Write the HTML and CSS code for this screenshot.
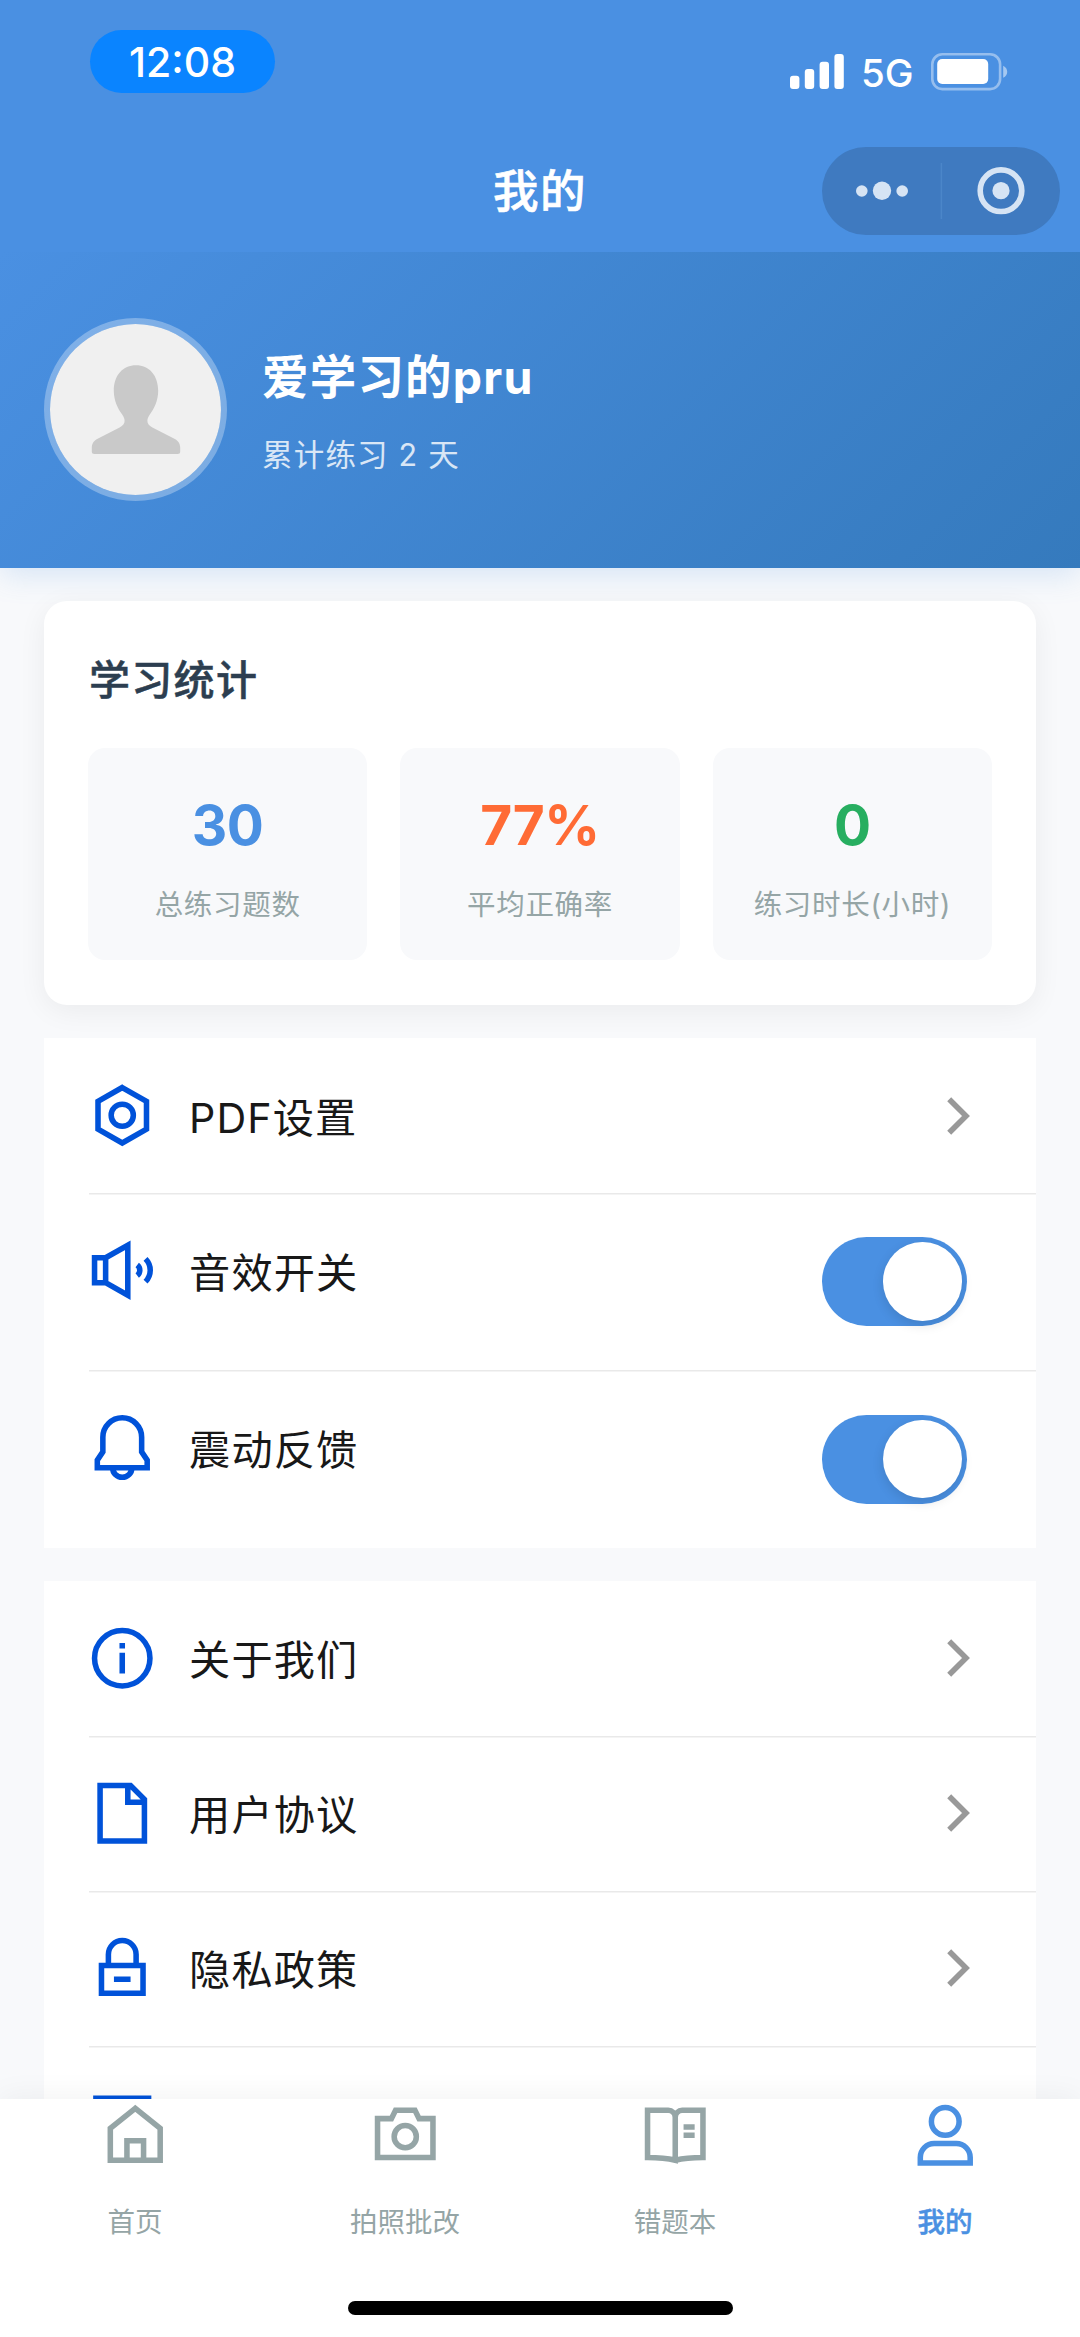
FILE: index.html
```html
<!DOCTYPE html>
<html lang="zh-CN">
<head>
<meta charset="utf-8">
<title>我的</title>
<link rel="stylesheet" href="styles.css">
</head>
<body>
<div class="app">
  <header class="top">
    <div class="status">
      <div class="clock"><span class="clock-text">12:08</span></div>
      <div class="signals">
        <svg class="bars" width="54" height="35" viewBox="0 0 54 35" fill="#fff">
          <rect x="0" y="21.7" width="9.4" height="13.3" rx="3"/>
          <rect x="14.8" y="15" width="9.4" height="20" rx="3"/>
          <rect x="29.6" y="7.7" width="9.4" height="27.3" rx="3"/>
          <rect x="44.4" y="0" width="9.4" height="35" rx="3"/>
        </svg>
        <span class="network">5G</span>
        <svg class="battery" width="77" height="38" viewBox="0 0 77 38">
          <rect x="1.3" y="1.3" width="67.8" height="34.8" rx="10" fill="none" stroke="#fff" stroke-opacity=".42" stroke-width="2.6"/>
          <rect x="6.2" y="6" width="51" height="25" rx="5" fill="#fff"/>
          <path d="M72.2 12.7q4 2 4 6t-4 6z" fill="#fff" fill-opacity=".5"/>
        </svg>
      </div>
    </div>
    <div class="navbar">
      <h1 class="nav-title">我的</h1>
      <div class="capsule">
        <svg width="238" height="88" viewBox="0 0 238 88" fill="#d6e4f4">
          <circle cx="39.8" cy="44" r="5.8"/>
          <circle cx="60" cy="43.7" r="9.2"/>
          <circle cx="80.2" cy="44" r="5.8"/>
          <path d="M119.4 16v56" stroke="#4b86c9" stroke-width="1.5"/>
          <circle cx="179" cy="43.7" r="20.8" fill="none" stroke="#d6e4f4" stroke-width="5.6"/>
          <circle cx="179" cy="43.7" r="8.6"/>
        </svg>
      </div>
    </div>
  </header>

  <main class="content">
    <section class="profile">
      <div class="avatar">
        <svg width="172" height="172" viewBox="0 0 172 172" fill="#c9c9c9">
          <path d="M86 41.3c13 0 22.2 10 22.2 25.5 0 10-4.200 18-8.200 23.500-2 3-2.600 5-2.600 6.500 0 3 1.500 4.700 5 6.700l22 11.200c4 2.200 5.800 4.800 5.800 9V127.500q0 2.500-2.500 2.500H44.300q-2.500 0-2.500-2.500V123.700c0-4.200 1.800-6.800 5.800-9l22-11.200c3.500-2 5-3.700 5-6.700 0-1.500-.6-3.500-2.600-6.500-4-5.500-8.200-13.500-8.200-23.500C63.800 51.300 73 41.300 86 41.300z"/>
        </svg>
      </div>
      <div class="who">
        <div class="name">爱学习的pru</div>
        <div class="days">累计练习 2 天</div>
      </div>
    </section>

    <section class="stats">
      <h2 class="stats-title">学习统计</h2>
      <div class="tiles">
        <div class="tile"><div class="num blue">30</div><div class="label">总练习题数</div></div>
        <div class="tile"><div class="num orange">77%</div><div class="label">平均正确率</div></div>
        <div class="tile"><div class="num green">0</div><div class="label">练习时长(小时)</div></div>
      </div>
    </section>

    <section class="group">
      <div class="row">
        <svg class="icon" viewBox="0 0 24 24"><path d="M12 2l8.750 5v10L12 22l-8.750-5V7z"/><circle cx="12" cy="12" r="4"/></svg>
        <div class="cell"><span class="text">PDF设置</span><svg class="chevron" viewBox="0 0 24 38"><path d="M2.200 2.200L19 19 2.200 35.800"/></svg></div>
      </div>
      <div class="row">
        <svg class="icon" viewBox="0 0 24 24"><path d="M2 7.500h4v9H2zM6 7.500L14 3v18l-8-4.500z"/><path d="M17.400 10.100a2.400 2.400 0 0 1 0 3.800M20.400 7.900a5.800 5.800 0 0 1 0 8.200"/></svg>
        <div class="cell"><span class="text">音效开关</span><span class="switch"><i class="knob"></i></span></div>
      </div>
      <div class="row">
        <svg class="icon" viewBox="0 0 24 24"><path d="M5 8a7 7 0 0 1 14 0v5.300l2 3V19H3v-2.700l2-3zM8.500 19a3.500 3.500 0 0 0 7 0"/></svg>
        <div class="cell"><span class="text">震动反馈</span><span class="switch"><i class="knob"></i></span></div>
      </div>
    </section>

    <section class="group">
      <div class="row">
        <svg class="icon" viewBox="0 0 24 24"><circle cx="12" cy="12" r="10"/><path d="M12 6.500v2M12 10v7.500"/></svg>
        <div class="cell"><span class="text">关于我们</span><svg class="chevron" viewBox="0 0 24 38"><path d="M2.200 2.200L19 19 2.200 35.800"/></svg></div>
      </div>
      <div class="row">
        <svg class="icon" viewBox="0 0 24 24"><path d="M4 2h11l5 5v15H4zM14 2v6h6"/></svg>
        <div class="cell"><span class="text">用户协议</span><svg class="chevron" viewBox="0 0 24 38"><path d="M2.200 2.200L19 19 2.200 35.800"/></svg></div>
      </div>
      <div class="row">
        <svg class="icon" viewBox="0 0 24 24"><path d="M4.500 11h15v10h-15zM7 11V7a5 5 0 0 1 10 0v4M9 16h6"/></svg>
        <div class="cell"><span class="text">隐私政策</span><svg class="chevron" viewBox="0 0 24 38"><path d="M2.200 2.200L19 19 2.200 35.800"/></svg></div>
      </div>
      <div class="row">
        <svg class="icon" viewBox="0 0 24 24"><path d="M2.500 3h19v18h-19z"/></svg>
        <div class="cell"></div>
      </div>
    </section>
  </main>

  <nav class="tabbar">
    <div class="tabs">
      <div class="tab">
        <svg class="tab-icon" viewBox="0 0 24 24"><path d="M12 2.300L3 9.500V21h18V9.500zM9 21v-7h6v7"/></svg>
        <span>首页</span>
      </div>
      <div class="tab">
        <svg class="tab-icon" viewBox="0 0 24 24"><path d="M2 6h5l1.500-3h7L17 6h5v14H2z"/><circle cx="12" cy="12.500" r="4"/></svg>
        <span>拍照批改</span>
      </div>
      <div class="tab">
        <svg class="tab-icon" viewBox="0 0 24 24"><path d="M12 21Q8 20 2 20V3h7.500A2.500 2.500 0 0 1 12 5.500zM12 21q4-1 10-1V3h-7.500A2.500 2.500 0 0 0 12 5.500M15 9h4M15 12h4"/></svg>
        <span>错题本</span>
      </div>
      <div class="tab active">
        <svg class="tab-icon" viewBox="0 0 24 24"><circle cx="12" cy="7" r="5"/><path d="M3 22v-2a5 5 0 0 1 5-5h8a5 5 0 0 1 5 5v2z"/></svg>
        <span>我的</span>
      </div>
    </div>
    <div class="home-indicator"></div>
  </nav>
</div>
</body>
</html>
```
FILE: styles.css
```css
* { box-sizing: border-box; margin: 0; padding: 0; }

body {
  width: 1080px;
  font-family: Inter, "Noto Sans CJK SC", sans-serif;
  background: #f8f9fb;
}

svg { display: block; flex: none; }

.app {
  display: flex;
  flex-direction: column;
  height: 2337px;
  overflow: hidden;
}

/* status bar and navigation */
.top { flex: none; height: 252px; background: #4a90e2; color: #fff; }

.status {
  display: flex;
  justify-content: space-between;
  align-items: flex-start;
  height: 147px;
  padding: 30px 72px 0 90px;
}

.clock {
  display: flex;
  align-items: center;
  justify-content: center;
  width: 185px;
  height: 63px;
  border-radius: 32px;
  background: #0a84ff;
  font-size: 41px;
  font-weight: 500;
}

.signals { display: flex; align-items: flex-start; padding-top: 23px; }
.bars { margin-top: 1px; }
.network { width: 87px; padding-left: 17px; font-size: 38.500px; font-weight: 450; line-height: 41px; }

.navbar {
  display: grid;
  grid-template-columns: 1fr auto 1fr;
  align-items: center;
  height: 88px;
  padding-right: 20px;
}

.nav-title {
  grid-column: 2;
  padding: 2px 0 0 20px;
  font-size: 45.500px;
  font-weight: 500;
  line-height: 86px;
  letter-spacing: 1.500px;
  -webkit-text-stroke: .6px currentColor;
}

.capsule { justify-self: end; width: 238px; height: 88px; border-radius: 44px; background: #3f7ac0; }

/* scrolling page */
.content { flex: 1; min-height: 0; overflow: hidden; }

.profile {
  display: flex;
  align-items: center;
  gap: 35px;
  height: 315.500px;
  padding: 0 44px;
  background: linear-gradient(135deg, #4a90e2 0%, #357abd 100%);
  box-shadow: 0 6px 29px rgba(74, 144, 226, .2);
  color: #fff;
}

.avatar {
  width: 183px;
  height: 183px;
  border: 6px solid rgba(255, 255, 255, .3);
  border-radius: 50%;
  background: #f0f0f0;
  background-clip: padding-box;
}

.who { padding-top: 3px; }
.name { margin-top: -2px; font-size: 46.500px; font-weight: 700; line-height: 62px; letter-spacing: 1.200px; }
.days { margin-top: 27px; font-size: 30.500px; line-height: 40px; opacity: .8; letter-spacing: 1.200px; }

.stats {
  height: 404px;
  margin: 33.500px 44px 0;
  padding: 44px;
  border-radius: 23px;
  background: #fff;
  box-shadow: 0 6px 29px rgba(0, 0, 0, .06);
}

.stats-title {
  height: 70px;
  padding: 0 0 0 1px;
  font-size: 41px;
  font-weight: 500;
  line-height: 70px;
  letter-spacing: 1.300px;
  color: #2c3e50;
  -webkit-text-stroke: .5px currentColor;
}

.tiles { display: grid; grid-template-columns: repeat(3, 1fr); gap: 33px; margin-top: 33px; }

.tile {
  height: 212px;
  padding-top: 43px;
  border-radius: 17px;
  background: #f8f9fb;
  text-align: center;
}

.num { font-size: 55px; font-weight: 700; line-height: 68px; letter-spacing: -.5px; }
.blue { color: #4a90e2; }
.orange { color: #ff6b35; }
.green { color: #27ae60; }
.label { margin-top: 26px; font-size: 28.500px; line-height: 40px; letter-spacing: .7px; color: #95a5a6; }

/* settings lists */
.group { margin: 33px 44px 0; background: #fff; }

.row { display: flex; padding-left: 44.600px; }

.icon {
  width: 66.500px;
  height: 66.500px;
  margin: 44.300px 34px 0 0;
  fill: none;
  stroke: #0052d9;
  stroke-width: 2;
}

/* the separator spans the whole row after its left inset */
.row + .row {
  background: linear-gradient(#e9e9e9, #e9e9e9) 44.600px 0 / 100% 1.500px no-repeat;
}

.cell {
  display: flex;
  flex: 1;
  justify-content: space-between;
  align-items: flex-start;
  min-height: 155px;
  padding: 44.200px 69px 44.200px 0;
}

.text {
  margin: 2.500px 0 -2.500px;
  font-size: 41.200px;
  line-height: 66.500px;
  letter-spacing: 1.100px;
  color: #181818;
}

.chevron {
  width: 24px;
  height: 38px;
  margin: 14.500px -4px 0 0;
  fill: none;
  stroke: #999;
  stroke-width: 5.600;
}

.switch {
  display: flex;
  justify-content: flex-end;
  width: 145px;
  height: 89px;
  padding: 5.300px;
  border-radius: 45px;
  background: #4a90e2;
}

.knob {
  width: 78.400px;
  height: 78.400px;
  border-radius: 50%;
  background: #fff;
  box-shadow: 0 4px 12px rgba(0, 0, 0, .12);
}

/* bottom navigation */
.tabbar {
  z-index: 1;
  display: flex;
  flex: none;
  flex-direction: column;
  align-items: center;
  justify-content: space-between;
  height: 238px;
  padding: 3px 0 22px;
  background: #fff;
  box-shadow: 0 -3px 28px rgba(0, 0, 0, .05);
}

.tabs { display: grid; grid-template-columns: repeat(4, 1fr); width: 100%; }

.tab {
  display: flex;
  flex-direction: column;
  align-items: center;
  gap: 33px;
  color: #95a5a6;
  font-size: 27.500px;
  line-height: 40px;
}

.tab.active { color: #4a90e2; font-weight: 500; -webkit-text-stroke: .5px currentColor; }
.tab-icon { width: 66.500px; height: 66.500px; fill: none; stroke: currentColor; stroke-width: 2; }
.home-indicator { width: 385px; height: 14px; border-radius: 7px; background: #000; }
```
